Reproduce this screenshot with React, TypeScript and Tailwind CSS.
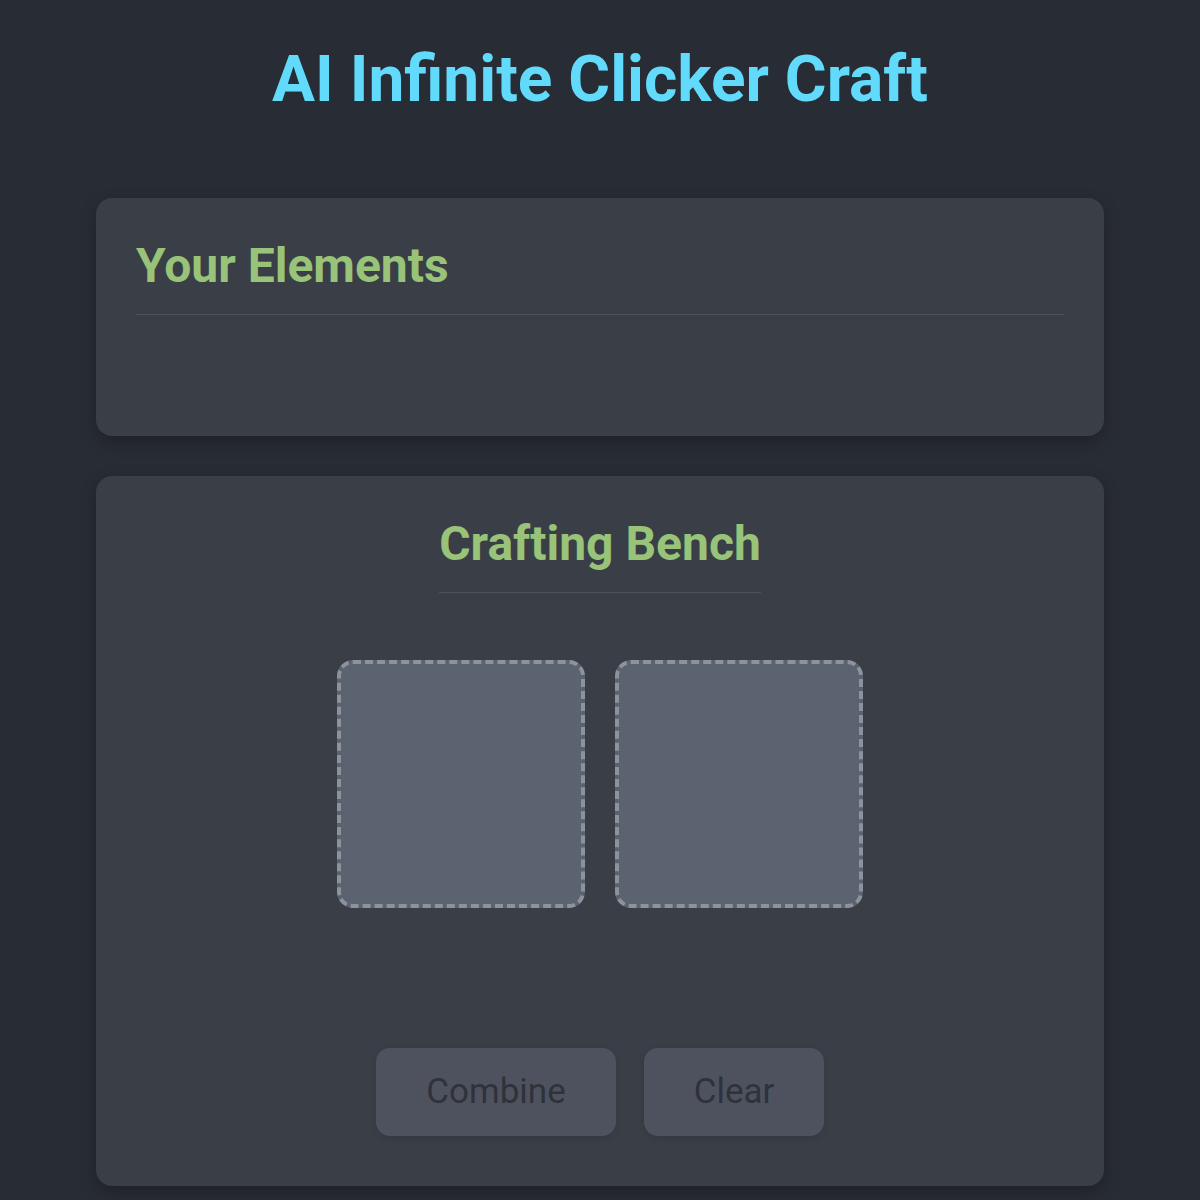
export default function App() {
  const slots = [0, 1];

  return (
    <div className="min-h-[1200px] bg-[#282c34] pb-10 font-['Roboto',sans-serif]">
      <h1 className="mt-0 pt-[42px] text-center text-[64px] font-bold leading-[76px] text-[#61dafb]">
        AI Infinite Clicker Craft
      </h1>

      <div className="mx-auto mt-[80px] flex w-[1008px] flex-col gap-10">
        {/* elements list */}
        <section className="rounded-2xl bg-[#3a3f47] px-10 pt-10 pb-10 shadow-[0_6px_16px_rgba(0,0,0,0.25)]">
          <h2 className="border-b border-[#4d525b] pb-5 text-[48px] font-bold leading-[56px] text-[#98c379]">
            Your Elements
          </h2>
          <div className="min-h-[81px]" />
        </section>

        {/* crafting bench */}
        <section className="flex flex-col items-center rounded-2xl bg-[#3a3f47] px-10 pt-10 pb-[50px] shadow-[0_6px_16px_rgba(0,0,0,0.25)]">
          <h2 className="inline-block border-b border-[#4d525b] pb-5 text-[48px] font-bold leading-[56px] text-[#98c379]">
            Crafting Bench
          </h2>

          <div className="mt-[67px] flex gap-[30px]">
            {slots.map((s) => (
              <div
                key={s}
                className="h-[248px] w-[248px] rounded-2xl border-4 border-dashed border-[#8d939d] bg-[#5c6370]"
              />
            ))}
          </div>

          <div className="mt-[140px] flex gap-[28px]">
            <button
              disabled
              className="h-[88px] w-[240px] rounded-[14px] bg-[#4e525e] text-[35px] text-[#2e323a] shadow-[0_2px_6px_rgba(0,0,0,0.12)]"
            >
              Combine
            </button>
            <button
              disabled
              className="h-[88px] w-[180px] rounded-[14px] bg-[#4e525e] text-[35px] text-[#2e323a] shadow-[0_2px_6px_rgba(0,0,0,0.12)]"
            >
              Clear
            </button>
          </div>
        </section>
      </div>
    </div>
  );
}
